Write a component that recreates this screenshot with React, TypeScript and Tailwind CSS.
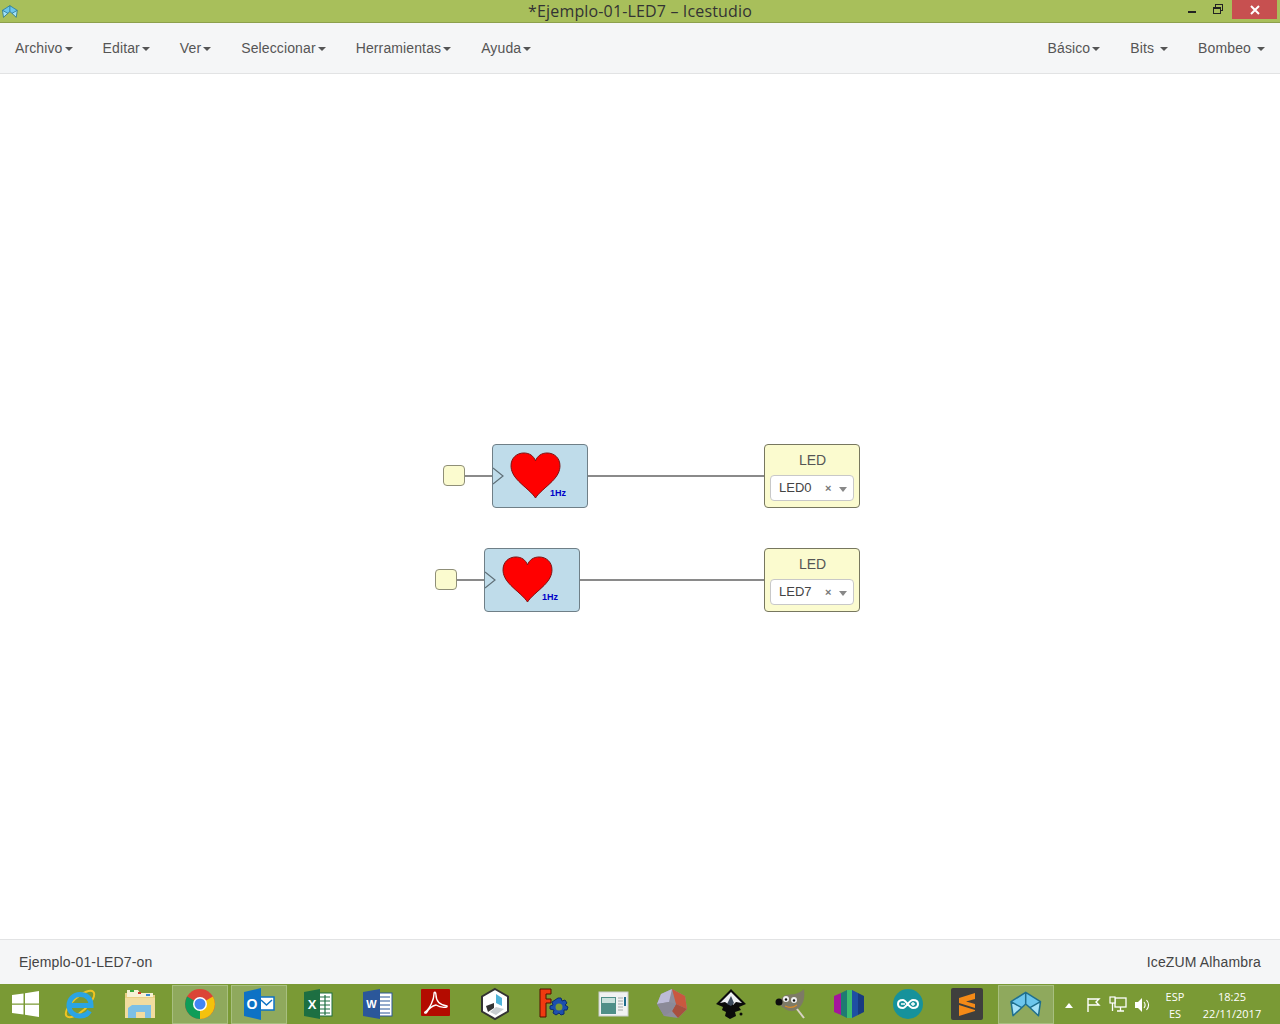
import type { ReactNode } from "react";

function Caret() {
  return (
    <span className="inline-block ml-[2px] align-middle w-0 h-0 border-t-4 border-x-4 border-x-transparent border-t-[#555]" />
  );
}

function MenuItem({ label, spaced }: { label: string; spaced?: boolean }) {
  return (
    <a className="px-[15px] leading-[20px] whitespace-pre cursor-pointer tracking-[0.12px]">
      {label}
      {spaced ? " " : ""}
      <Caret />
    </a>
  );
}

function AppIcon({ width, height }: { width: number; height: number }) {
  return (
    <svg width={width} height={height} viewBox="0 0 32 26" fill="none" className="block">
      <path d="M15.7 1.3 L1 10.7 L3 24.7 L11.7 16.7 L15.7 13 L20 16.7 L28.5 24.7 L30.5 10.7 Z" fill="#a5e2f8" />
      <path d="M15.7 1.3 L1 10.7 L11.7 16.7 L15.7 13 L20 16.7 L30.5 10.7 Z" fill="#6cc6ec" />
      <path
        d="M15.7 1.3 L1 10.7 L3 24.7 L11.7 16.7 L15.7 13 L20 16.7 L28.5 24.7 L30.5 10.7 Z M15.7 1.3 V13 M1 10.7 L11.7 16.7 M30.5 10.7 L20 16.7"
        stroke="#1f6f8e"
        strokeWidth="1.5"
        strokeLinejoin="round"
      />
    </svg>
  );
}

function Heart() {
  return (
    <svg width="51" height="47" viewBox="0 0 52 48" className="block">
      <path
        d="M26 47 C23 42 15 36 9 30 C3 24 1 19 1 14 C1 6 7 1 14 1 C20 1 24 4 26 9 C28 4 32 1 38 1 C45 1 51 6 51 14 C51 19 49 24 43 30 C37 36 29 42 26 47 Z"
        fill="#ff0000"
        stroke="#7a1010"
        strokeWidth="1"
      />
    </svg>
  );
}

function ClockBlock({ left, top }: { left: number; top: number }) {
  return (
    <>
      <div
        className="absolute w-[22px] h-[21px] rounded-[4px] border border-[#8f8f78] bg-[#fbfbcf]"
        style={{ left: left - 49, top: top + 21 }}
      />
      <div
        className="absolute h-[2px] bg-[#8a8a8a]"
        style={{ left: left - 27, top: top + 31, width: 27 }}
      />
      <div
        className="absolute w-[96px] h-[64px] rounded-[4px] border border-[#6f7f87] bg-[#bfdcea]"
        style={{ left, top }}
      >
        <svg width="12" height="18" viewBox="0 0 12 18" className="absolute left-0 top-[22px]">
          <path d="M0 1 L10 9 L0 17" fill="none" stroke="#5f6f77" strokeWidth="1.2" />
        </svg>
        <div className="absolute left-[17px] top-[7px]">
          <Heart />
        </div>
        <span className="absolute left-[57px] top-[42px] text-[9px] leading-[12px] font-bold text-[#0000c8]">
          1Hz
        </span>
      </div>
    </>
  );
}

function LedBlock({ top, pin }: { top: number; pin: string }) {
  return (
    <div
      className="absolute left-[764px] w-[96px] h-[64px] rounded-[4px] border border-[#77775f] bg-[#fbfbcf] flex flex-col items-center"
      style={{ top }}
    >
      <div className="text-[14px] leading-[20px] mt-[5px] text-[#555] pl-[1px]">LED</div>
      <div className="mt-[5px] w-[84px] h-[26px] rounded-[4px] border border-[#c8c8c8] bg-white flex items-center pl-[8px] text-[13px] text-[#444] relative">
        {pin}
        <span className="absolute left-[54px] top-[4px] text-[11px] leading-[16px] font-bold text-[#777]">×</span>
        <span className="absolute left-[68px] top-[11px] w-0 h-0 border-t-[5px] border-x-4 border-x-transparent border-t-[#888]" />
      </div>
    </div>
  );
}

function Task({ children, active, wide }: { children: ReactNode; active?: boolean; wide?: boolean }) {
  return (
    <div className={`${wide ? "w-[60px]" : "w-[59px]"} h-[40px] flex items-center justify-center shrink-0`}>
      <div
        className={`w-[56px] h-[39px] flex items-center justify-center ${
          active ? "bg-[#8fa95d] border border-[#a8bf80]" : ""
        }`}
      >
        {children}
      </div>
    </div>
  );
}

const Ic = ({ children }: { children: ReactNode }) => (
  <svg width="34" height="34" viewBox="0 0 34 34" className="block">
    {children}
  </svg>
);

export default function App() {
  return (
    <div className="w-[1280px] h-[1024px] flex flex-col overflow-hidden bg-white font-['Liberation_Sans',Arial,sans-serif]">
      {/* window title */}
      <div className="h-[23px] shrink-0 bg-[#a8bf5b] border-b border-[#8da04c] relative flex items-center justify-center text-[16px] text-[#333] font-['Open_Sans',sans-serif]">
        <div className="absolute left-[2px] top-[5px]">
          <AppIcon width={16} height={13} />
        </div>
        <span className="tracking-[0.15px]">*Ejemplo-01-LED7 – Icestudio</span>
        <div className="absolute left-[1188px] top-[11px] w-[8px] h-[2px] bg-[#222]" />
        <div className="absolute left-[1213px] top-[4px] w-[10px] h-[10px]">
          <div className="absolute left-[2px] top-0 w-[8px] h-[7px] border border-[#222]" />
          <div className="absolute left-0 top-[3px] w-[8px] h-[7px] border border-[#222] border-t-2 bg-[#a8bf5b]" />
        </div>
        <div className="absolute left-[1232px] top-0 w-[45px] h-[19px] bg-[#c75050] flex items-center justify-center">
          <svg width="10" height="10" viewBox="0 0 10 10">
            <path d="M1 1 L9 9 M9 1 L1 9" stroke="white" strokeWidth="2" />
          </svg>
        </div>
      </div>

      {/* menu bar */}
      <div className="h-[51px] shrink-0 bg-[#f5f6f7] border-b border-[#e2e3e4] flex items-center justify-between text-[14px] text-[#555]">
        <div className="flex">
          <MenuItem label="Archivo" />
          <MenuItem label="Editar" />
          <MenuItem label="Ver" />
          <MenuItem label="Seleccionar" />
          <MenuItem label="Herramientas" />
          <MenuItem label="Ayuda" />
        </div>
        <div className="flex">
          <MenuItem label="Básico" />
          <MenuItem label="Bits" spaced />
          <MenuItem label="Bombeo" spaced />
        </div>
      </div>

      {/* design canvas */}
      <div className="flex-1 relative bg-white">
        <ClockBlock left={492} top={370} />
        <div className="absolute left-[588px] top-[401px] w-[176px] h-[2px] bg-[#8a8a8a]" />
        <LedBlock top={370} pin="LED0" />
        <ClockBlock left={484} top={474} />
        <div className="absolute left-[580px] top-[505px] w-[184px] h-[2px] bg-[#8a8a8a]" />
        <LedBlock top={474} pin="LED7" />
      </div>

      {/* status bar */}
      <div className="h-[45px] shrink-0 bg-[#f5f6f7] border-t border-[#e2e3e4] flex items-center justify-between px-[19px] text-[14px] text-[#444] tracking-[0.15px]">
        <span>Ejemplo-01-LED7-on</span>
        <span>IceZUM Alhambra</span>
      </div>

      {/* windows taskbar */}
      <div className="h-[40px] shrink-0 bg-[#7a9a35] flex items-center text-white font-['Open_Sans',sans-serif]">
        <div className="w-[50px] h-[40px] flex items-center justify-center shrink-0">
          <svg width="27" height="26" viewBox="0 0 27 26">
            <path d="M0 4 L11.5 2.4 V12.4 H0 Z M13 2.2 L27 0 V12.4 H13 Z M0 13.8 H11.5 V23.6 L0 22 Z M13 13.8 H27 V26 L13 23.8 Z" fill="white" />
          </svg>
        </div>
        <Task wide>
          <Ic>
            <ellipse cx="17" cy="17" rx="18" ry="7" transform="rotate(-42 17 17)" fill="none" stroke="#f0c422" strokeWidth="2" />
            <path d="M7 18.5 H28 C28 11 23 7.5 17 7.5 C10.5 7.5 6 12.5 6 18.5 C6 25 11 29 17 29 C21 29 24.5 27.5 26.5 24" fill="none" stroke="#2ba4e4" strokeWidth="5" />
          </Ic>
        </Task>
        <Task wide>
          <Ic>
            <path d="M2 6 H14 L16 8 H32 V30 H2 Z" fill="#e9cf85" />
            <path d="M4 3 H15 L17 6 H30 V10 H4 Z" fill="#f6f1d6" />
            <rect x="7" y="3" width="4" height="2" fill="#38a83c" />
            <rect x="15" y="5" width="3" height="2" fill="#d0392e" />
            <rect x="23" y="7" width="4" height="2" fill="#3a89d6" />
            <rect x="2" y="11" width="30" height="20" fill="#f1dc9f" />
            <path d="M5 31 V21 L9 18 H28 V31 H22 V25 H13 V31 Z" fill="#7cc0e6" />
          </Ic>
        </Task>
        <Task active>
          <Ic>
            <circle cx="17" cy="17" r="15" fill="#db4437" />
            <path d="M17 17 L29.9 9.5 A15 15 0 0 1 17 32 Z" fill="#f4c20d" />
            <path d="M17 17 L17 32 A15 15 0 0 1 4.1 9.5 Z" fill="#0f9d58" />
            <circle cx="17" cy="17" r="7" fill="white" />
            <circle cx="17" cy="17" r="5.5" fill="#4285f4" />
          </Ic>
        </Task>
        <Task active>
          <Ic>
            <rect x="17" y="10" width="15" height="13" fill="white" stroke="#0d72c5" strokeWidth="1.5" />
            <path d="M19 13 L24.5 18 L30 13" fill="none" stroke="#0d72c5" strokeWidth="1.5" />
            <path d="M2 5 L19 1 V33 L2 29 Z" fill="#0d72c5" />
            <text x="10" y="22" textAnchor="middle" fontSize="14" fontWeight="700" fill="white" fontFamily="Liberation Sans">O</text>
          </Ic>
        </Task>
        <Task>
          <Ic>
            <rect x="16" y="6" width="15" height="23" fill="white" stroke="#1d6f42" strokeWidth="1" />
            <path d="M19 10 H29 M19 14 H29 M19 18 H29 M19 22 H29 M19 26 H29 M24 8 V28" stroke="#1d6f42" strokeWidth="1.2" />
            <path d="M3 5 L19 2 V32 L3 29 Z" fill="#1d6f42" />
            <text x="11" y="22" textAnchor="middle" fontSize="13" fontWeight="700" fill="white" fontFamily="Liberation Sans">X</text>
          </Ic>
        </Task>
        <Task>
          <Ic>
            <rect x="16" y="6" width="16" height="23" fill="white" stroke="#2b579a" strokeWidth="1" />
            <path d="M20 10 H30 M20 14 H30 M20 18 H30 M20 22 H30 M20 26 H30" stroke="#2b579a" strokeWidth="1.2" />
            <path d="M3 5 L20 2 V32 L3 29 Z" fill="#2b579a" />
            <text x="11.5" y="21" textAnchor="middle" fontSize="11" fontWeight="700" fill="white" fontFamily="Liberation Sans">W</text>
          </Ic>
        </Task>
        <Task>
          <Ic>
            <rect x="2" y="2" width="29" height="27" rx="1" fill="#b30b00" />
            <path d="M6 25 C11 22 15 12 15 7 C15 4 17 5 17 8 C17 14 21 18 28 19 C29 21 22 21 17 18 C13 19 10 21 8 25 C7 27 5 26 6 25 Z" fill="none" stroke="white" strokeWidth="1.4" />
          </Ic>
        </Task>
        <Task>
          <Ic>
            <path d="M17 2 L30 9.5 V24.5 L17 32 L4 24.5 V9.5 Z" fill="white" stroke="#333" strokeWidth="2" />
            <path d="M18 7 L24 11 V19 L18 16 Z" fill="#4eb3d8" />
            <path d="M8 19 L16 16 V21 L10 25 Z" fill="#333" />
            <path d="M18 20 L26 22 L18 28 L12 25 Z" fill="#c8ced1" />
          </Ic>
        </Task>
        <Task>
          <Ic>
            <path d="M3 2 H14 V7 H9 V12 H14 V16 H9 V30 H3 Z" fill="#f03a10" stroke="#501000" strokeWidth="1" />
            <path d="M21 11 L24 11 L25 14 L28 13 L30 16 L28 18 L31 20 L30 23 L27 23 L27 27 L24 28 L22 26 L19 28 L16 26 L17 23 L13 22 L13 19 L16 18 L15 15 L18 13 Z" fill="#1c4fae" stroke="#0c2c70" strokeWidth="1" />
            <circle cx="22" cy="20" r="3.5" fill="#7a9a35" />
          </Ic>
        </Task>
        <Task>
          <Ic>
            <rect x="3" y="5" width="29" height="24" fill="#f1f2f2" stroke="#c9cdcd" strokeWidth="1" />
            <rect x="5" y="10" width="15" height="17" fill="#4f8f88" />
            <rect x="6" y="11" width="13" height="5" fill="#c9e1dc" />
            <path d="M22 11 H27 M22 14 H27 M22 17 H27 M22 20 H27 M22 23 H27" stroke="#a2a8a8" strokeWidth="1" />
            <rect x="28" y="10" width="2" height="9" fill="#1e6a8c" />
          </Ic>
        </Task>
        <Task>
          <Ic>
            {/* polyhedron */}
            <path d="M17 2 L30 9 L32 22 L23 31 L9 29 L2 17 L6 7 Z" fill="#8f8e9c" />
            <path d="M17 2 L6 7 L2 17 L14 15 Z" fill="#bdbcd8" />
            <path d="M17 2 L30 9 L32 22 L21 17 Z" fill="#c9583f" />
            <path d="M21 17 L32 22 L23 31 L17 24 Z" fill="#a8503e" />
            <path d="M14 15 L21 17 L17 24 L9 29 L2 17 Z" fill="#8b8a98" />
          </Ic>
        </Task>
        <Task>
          <Ic>
            {/* inkscape */}
            <path d="M17 2 L32 17 L25 20 L27 23 L21 25 L22 29 L16 32 L11 29 L12 25 L8 23 L9 20 L2 17 Z" fill="#0b0b0b" />
            <path d="M17 5 L28 16 L22 15 L19 18 L17 11 L14 17 L11 15 L6 16 Z" fill="#eef0f4" />
            <path d="M17 9 L20 16 L17 19 L13 17 Z" fill="#3c4a5c" />
            <circle cx="27" cy="27" r="1.5" fill="#0b0b0b" />
          </Ic>
        </Task>
        <Task>
          <Ic>
            {/* gimp */}
            <path d="M8 12 C12 6 18 8 22 7 C26 6 29 4 31 2 C32 10 31 16 26 21 C22 25 15 25 11 21 C8 20 6 18 8 12 Z" fill="#7d7a66" />
            <circle cx="6" cy="15" r="3.5" fill="#0e0e0e" />
            <circle cx="13" cy="12" r="3" fill="#efefef" />
            <circle cx="21" cy="13" r="3" fill="#efefef" />
            <circle cx="13" cy="12.5" r="1.2" fill="#111" />
            <circle cx="21" cy="13.5" r="1.2" fill="#111" />
            <path d="M12 19 C16 21 20 21 24 18" fill="none" stroke="#d98a2a" strokeWidth="1.2" />
            <path d="M24 22 L31 31" stroke="#d8d2c4" strokeWidth="2" />
          </Ic>
        </Task>
        <Task>
          <Ic>
            <path d="M2 9 L9 6 V28 L2 25 Z" fill="#a5159c" />
            <path d="M9 6 L15 3 V31 L9 28 Z" fill="#1f7b72" />
            <path d="M15 3 L20 3 V31 L15 31 Z" fill="#3fbc6e" />
            <path d="M20 3 L26 6 V28 L20 31 Z" fill="#1e4fa3" />
            <path d="M26 6 L32 9 V25 L26 28 Z" fill="#183a80" />
          </Ic>
        </Task>
        <Task>
          <Ic>
            <circle cx="17" cy="17" r="15" fill="#16929b" />
            <path d="M12 13 C8 13 7 15 7 17 C7 19 8 21 12 21 C15 21 18 13 22 13 C26 13 27 15 27 17 C27 19 26 21 22 21 C18 21 15 13 12 13 Z" fill="none" stroke="white" strokeWidth="2" />
            <path d="M10 17 H14 M20 17 H24 M22 15 V19" stroke="white" strokeWidth="1.3" />
          </Ic>
        </Task>
        <Task>
          <Ic>
            <rect x="1" y="1" width="32" height="32" rx="2" fill="#3f3f3d" />
            <path d="M25 6 L9 11 V18 L25 23 V17 L16 14.5 L25 12 Z M9 16 L25 21 V24 L9 29 Z" fill="#f58a17" />
          </Ic>
        </Task>
        <Task active>
          <AppIcon width={32} height={26} />
        </Task>

        {/* tray */}
        <div className="flex-1 h-[40px] flex items-center relative text-[12px]">
          <span className="absolute left-[10px] top-[19px] w-0 h-0 border-b-[5px] border-x-[4px] border-x-transparent border-b-white" />
          <svg width="16" height="16" viewBox="0 0 16 16" className="absolute left-[31px] top-[13px]">
            <path d="M2 1 V15 M2 2 H13 L10 5 L13 8 H2" fill="none" stroke="white" strokeWidth="1.4" />
          </svg>
          <svg width="18" height="18" viewBox="0 0 18 18" className="absolute left-[54px] top-[12px]">
            <rect x="6" y="2" width="11" height="9" fill="none" stroke="white" strokeWidth="1.3" />
            <rect x="1" y="1" width="5" height="6" fill="#7a9a35" stroke="white" strokeWidth="1.2" />
            <path d="M3.5 7 V15 M8 15 H15 M11.5 11 V15" stroke="white" strokeWidth="1.3" />
          </svg>
          <svg width="18" height="18" viewBox="0 0 18 18" className="absolute left-[78px] top-[12px]">
            <path d="M2 6 H5 L9 2 V16 L5 12 H2 Z" fill="white" />
            <path d="M11 6 C12.5 8 12.5 10 11 12 M13.5 4 C16 7 16 11 13.5 14" fill="none" stroke="white" strokeWidth="1.1" />
          </svg>
          <div className="absolute left-[106px] top-[4px] w-[28px] text-center leading-[17px] text-[11px]">
            <div>ESP</div>
            <div>ES</div>
          </div>
          <div className="absolute left-[144px] top-[4px] w-[66px] text-center leading-[17px] text-[11px]">
            <div>18:25</div>
            <div>22/11/2017</div>
          </div>
        </div>
      </div>
    </div>
  );
}
